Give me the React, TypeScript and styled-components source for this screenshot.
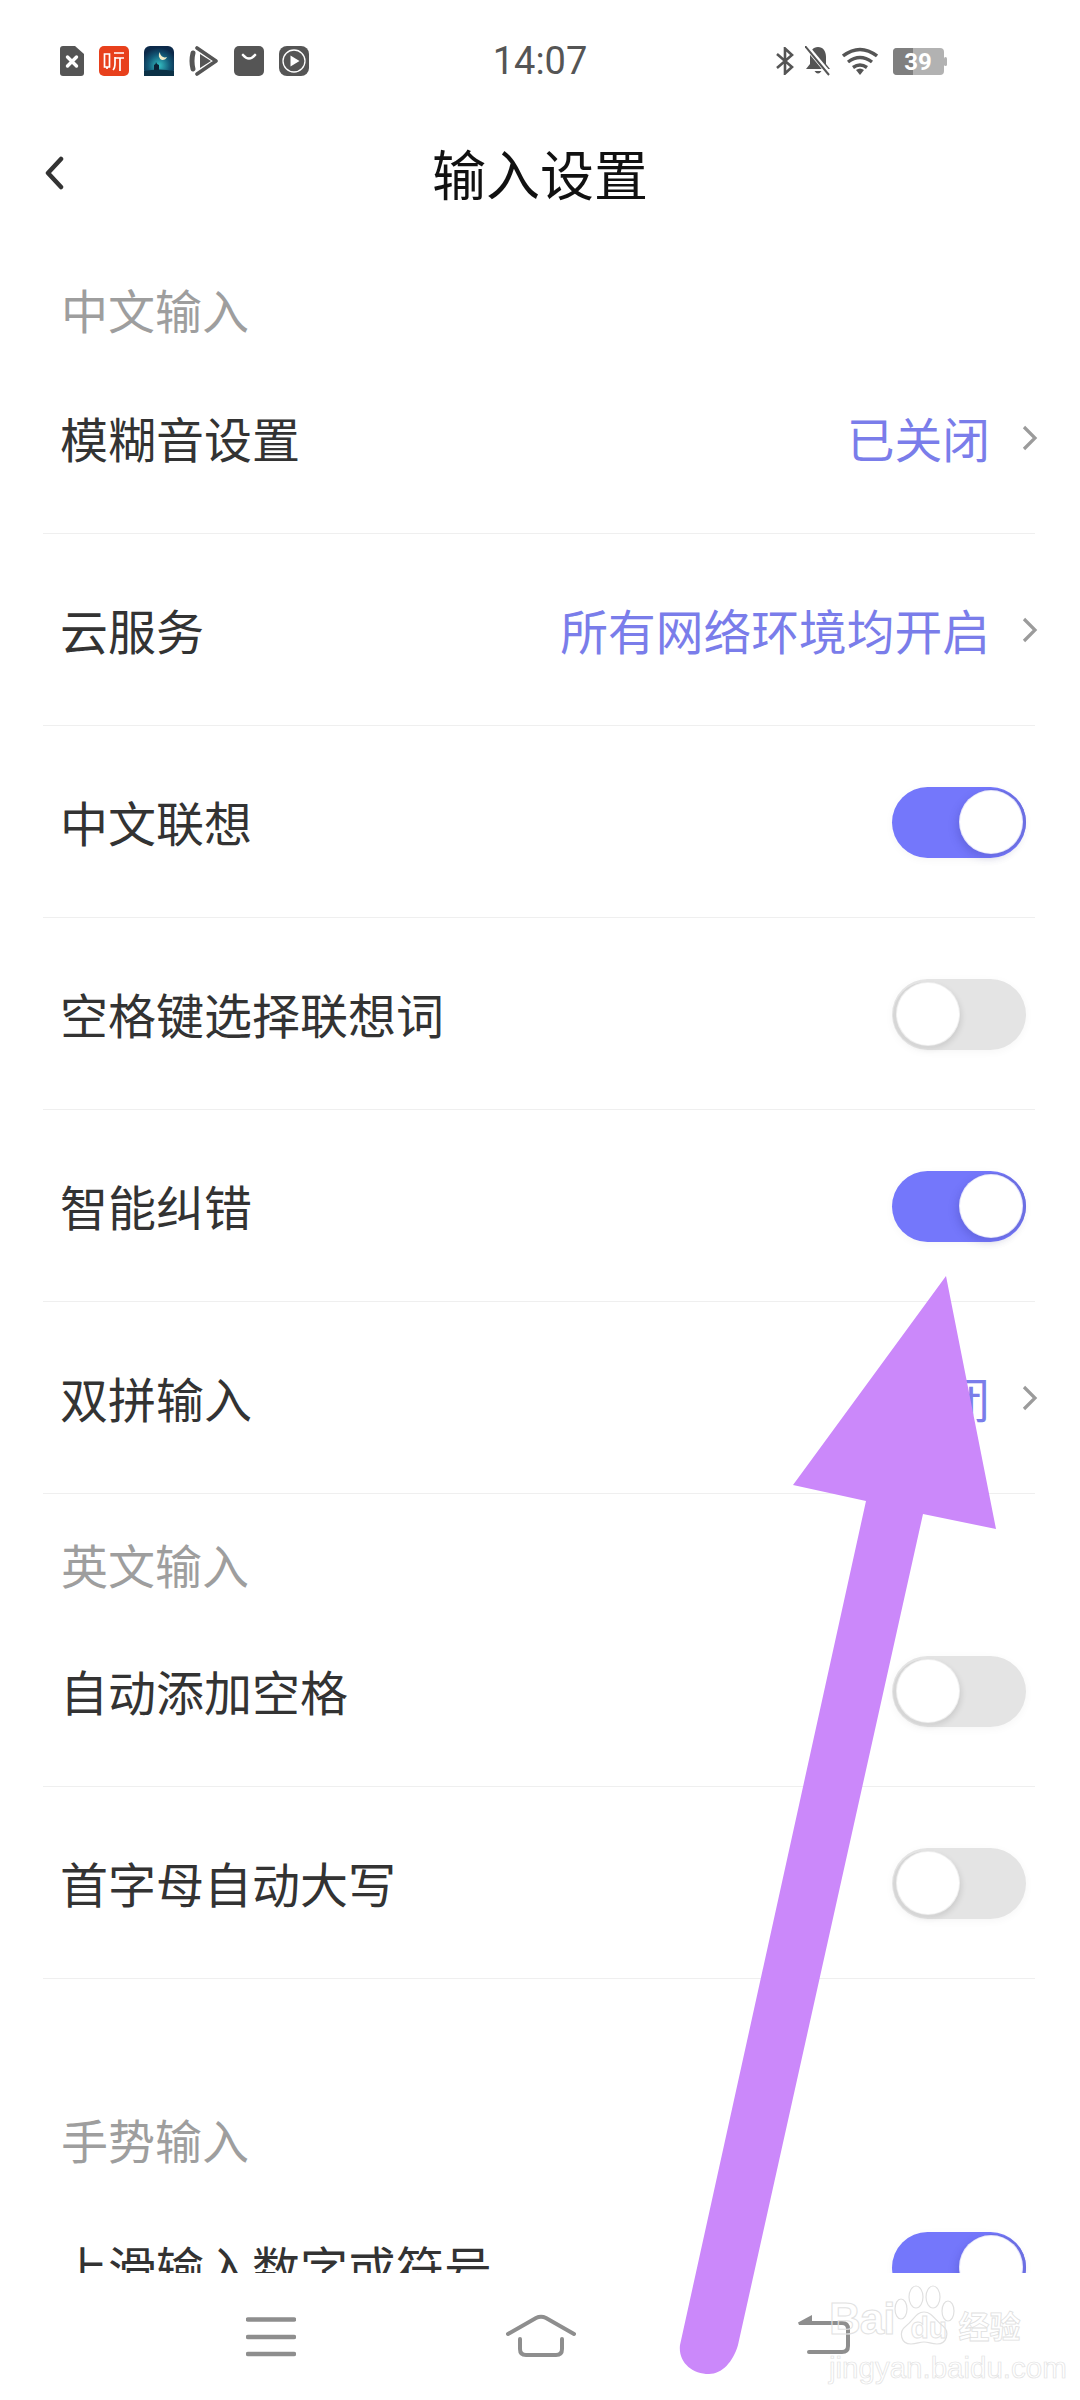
import React from 'react';
import styled, {createGlobalStyle} from 'styled-components';

const GlobalStyle = createGlobalStyle`
  html, body {
    margin: 0;
    padding: 0;
    background: #ffffff;
  }
  body {
    font-family: 'Noto Sans', 'Noto Sans CJK SC', sans-serif;
  }
`;

const Screen = styled.div`
  position: relative;
  width: 1080px;
  height: 2400px;
  background: #ffffff;
  overflow: hidden;
  display: flex;
  flex-direction: column;
`;

const StatusBar = styled.div`
  height: 122px;
  display: grid;
  grid-template-columns: 1fr auto 1fr;
  align-items: center;
  flex: none;
`;

const StatusLeft = styled.div`
  display: flex;
  align-items: center;
  gap: 15px;
  padding-left: 60px;
`;

const StatusRight = styled.div`
  display: flex;
  align-items: center;
  justify-content: flex-end;
  gap: 11px;
  padding-right: 133px;
`;

const Clock = styled.div`
  font-family: 'Roboto', sans-serif;
  font-size: 38px;
  color: #555555;
`;

const Header = styled.div`
  height: 108px;
  position: relative;
  display: flex;
  align-items: center;
  justify-content: center;
  flex: none;
`;

const BackButton = styled.svg`
  position: absolute;
  left: 44px;
  top: 34px;
`;

const Title = styled.div`
  font-size: 54px;
  line-height: 70px;
  color: #111111;
  margin-top: -2px;
`;

const List = styled.div`
  height: 2043px;
  overflow: hidden;
  flex: none;
`;

const SectionLabel = styled.div<{$height: number; $top: number}>`
  height: ${p => p.$height}px;
  margin-top: ${p => p.$top}px;
  padding-left: 61px;
  font-size: 47px;
  line-height: 60px;
  color: #9e9e9e;
`;

const Row = styled.div`
  height: 191px;
  margin: 0 45px 0 43px;
  border-bottom: 1px solid #efefef;
  display: flex;
  align-items: center;
  justify-content: space-between;
  padding-left: 17px;
`;

const RowLabel = styled.div`
  font-size: 48px;
  color: #333333;
  margin-top: -2px;
`;

const RowValue = styled.div`
  display: flex;
  align-items: center;
  gap: 32px;
  margin-right: -3px;
  font-size: 47.75px;
  color: #7a7dea;
`;

const Chevron = styled.svg`
  flex: none;
`;

const ToggleTrack = styled.div<{$on: boolean}>`
  position: relative;
  width: 134px;
  height: 71px;
  margin: 2px 9px 0 0;
  border-radius: 36px;
  background: ${p => (p.$on ? '#7477fb' : '#e4e4e4')};
  box-shadow: 0 2px 8px rgba(0, 0, 0, 0.04);
`;

const ToggleKnob = styled.div<{$on: boolean}>`
  position: absolute;
  top: 4px;
  left: ${p => (p.$on ? '68px' : '5px')};
  width: 62px;
  height: 62px;
  border-radius: 50%;
  background: #ffffff;
  box-shadow: ${p =>
    p.$on
      ? '0 0 0 1px #e6e6fb, 2px 0 0 2px #6c6fe2, -3px 4px 8px rgba(50, 50, 150, 0.25)'
      : '0 0 0 1px #f0f0f0, -2px 1px 0 2px #d6d6d6, 2px 3px 6px rgba(0, 0, 0, 0.12)'};
`;

const NavBar = styled.div`
  flex: 1;
  background: #ffffff;
  display: grid;
  grid-template-columns: 270px 270px 296px;
  padding-left: 136px;
  position: relative;
  z-index: 1;
`;

const NavItem = styled.div`
  display: flex;
  align-items: flex-start;
  justify-content: center;
  padding-top: 41px;
`;

const Arrow = styled.svg`
  position: absolute;
  top: 0;
  left: 0;
  z-index: 2;
  pointer-events: none;
`;

const Watermark = styled.div`
  position: absolute;
  z-index: 3;
  left: 829px;
  top: 2285px;
  width: 200px;
  color: transparent;
  font-family: 'Liberation Sans', sans-serif;
  white-space: nowrap;
`;

const WatermarkMain = styled.div`
  display: flex;
  align-items: flex-end;
  height: 62px;
`;

const WatermarkBai = styled.span`
  font-size: 44px;
  font-weight: 700;
  line-height: 46px;
  letter-spacing: -1px;
  margin-bottom: 5px;
  -webkit-text-stroke: 1px #e2e2e2;
`;

const PawWrap = styled.div`
  position: relative;
  width: 62px;
  height: 62px;
`;

const WatermarkDu = styled.span`
  position: absolute;
  left: 16px;
  bottom: 4px;
  font-size: 30px;
  font-weight: 700;
  line-height: 30px;
  -webkit-text-stroke: 0.9px #e2e2e2;
`;

const WatermarkCn = styled.span`
  font-family: 'Noto Sans CJK SC', sans-serif;
  font-size: 31px;
  line-height: 38px;
  font-weight: 700;
  margin: 0 0 3px 2px;
  -webkit-text-stroke: 0.8px #e0e0e0;
`;

const WatermarkUrl = styled.div`
  font-size: 29.5px;
  line-height: 34px;
  margin-top: 4px;
  font-weight: 400;
  -webkit-text-stroke: 0.7px #e2e2e2;
`;

const IconRow = {
  Doc: () => (
    <svg width="24" height="30" viewBox="0 0 24 30">
      <path d="M3 0h12l9 8v19a3 3 0 0 1-3 3H3a3 3 0 0 1-3-3V3a3 3 0 0 1 3-3z" fill="#555" />
      <path d="M7.500 11l9 9M16.500 11l-9 9" stroke="#fff" strokeWidth="3.4" strokeLinecap="round" />
    </svg>
  ),
  Ting: () => (
    <svg width="30" height="30" viewBox="0 0 30 30">
      <rect width="30" height="30" rx="5" fill="#e8401c" />
      <path
        d="M5.500 8h5v13h-5zM8 21v2M15 7h10M16 11v6q0 5-2 7M16 12h9M21 12v13"
        stroke="#fff"
        strokeWidth="1.7"
        fill="none"
      />
    </svg>
  ),
  Night: () => (
    <svg width="30" height="30" viewBox="0 0 30 30">
      <defs>
        <radialGradient id="night" cx="50%" cy="65%" r="60%">
          <stop offset="0%" stopColor="#35c0c4" />
          <stop offset="60%" stopColor="#125a78" />
          <stop offset="100%" stopColor="#0c2a4a" />
        </radialGradient>
      </defs>
      <rect width="30" height="30" rx="6" fill="url(#night)" />
      <path d="M16 6a5 5 0 0 0 2 8 5 5 0 0 0 5-3 5 5 0 0 1-7-5z" fill="#f2edc8" />
      <path d="M10 25v-6l1.500-1 .5-2 1 2 2 1v6z" fill="#0b2236" />
      <path d="M0 25q15-3 30 0v5H0z" fill="#0b3146" />
    </svg>
  ),
  Play: () => (
    <svg width="30" height="30" viewBox="0 0 30 30">
      <path d="M4 7Q2 15 4 23" stroke="#555" strokeWidth="5" fill="none" strokeLinecap="round" />
      <path d="M8 2l19 13L8 28" stroke="#555" strokeWidth="3.6" fill="none" strokeLinejoin="round" strokeLinecap="round" />
      <path d="M11 8l11 7-11 7z" fill="#555" />
    </svg>
  ),
  Bag: () => (
    <svg width="30" height="30" viewBox="0 0 30 30">
      <rect width="30" height="30" rx="5" fill="#555" />
      <path d="M9 9q6 7 12 0" stroke="#fff" strokeWidth="2.6" fill="none" strokeLinecap="round" />
    </svg>
  ),
  Circle: () => (
    <svg width="30" height="30" viewBox="0 0 30 30">
      <rect width="30" height="30" rx="8" fill="#555" />
      <circle cx="15" cy="15" r="11" stroke="#fff" strokeWidth="1.3" fill="none" />
      <path d="M11.500 9.500l9 5.500-9 5.500z" fill="#fff" />
    </svg>
  ),
};

const StatusIcons = () => (
  <>
    <svg width="18" height="28" viewBox="0 0 18 28">
      <path d="M1 7l15 13-7 6.500V1.500L16 8 1 21" stroke="#555" strokeWidth="2.6" fill="none" />
    </svg>
    <svg width="26" height="30" viewBox="0 0 26 30">
      <path d="M13 1c5 0 8 4 8 10v7l4 5H1l4-5v-7C5 5 8 1 13 1z" fill="#555" />
      <path d="M9.500 25q3.500 5 7 0z" fill="#555" />
      <path d="M1 0l24 29" stroke="#fff" strokeWidth="5" />
      <path d="M0 0l24 29" stroke="#555" strokeWidth="2" />
    </svg>
    <svg width="36" height="28" viewBox="0 0 36 28">
      <path d="M1 9q17-13 34 0M6 15q12-9 24 0M11 20.500q7-5 14 0" stroke="#555" strokeWidth="3.4" fill="none" />
      <path d="M14 23q4-3 8 0l-4 5z" fill="#555" />
    </svg>
    <svg width="54" height="27" viewBox="0 0 54 27" style={{marginLeft: 4}}>
      <rect width="51" height="27" rx="4" fill="#b2b2b2" />
      <path d="M4 0h16v27H4a4 4 0 0 1-4-4V4a4 4 0 0 1 4-4z" fill="#7f7f7f" />
      <rect x="51" y="9" width="3" height="9" rx="1.500" fill="#b2b2b2" />
      <text x="25" y="22" fontSize="24" fontWeight="700" textAnchor="middle" fill="#fff" fontFamily="Roboto, sans-serif">
        39
      </text>
    </svg>
  </>
);

const RowChevron = () => (
  <Chevron width="16" height="26" viewBox="0 0 16 26">
    <path d="M2 2l11 11L2 24" stroke="#9b9b9b" strokeWidth="3.200" fill="none" />
  </Chevron>
);

const Toggle = ({on}: {on: boolean}) => (
  <ToggleTrack $on={on}>
    <ToggleKnob $on={on} />
  </ToggleTrack>
);

type Item = {label: string; value?: string; toggle?: boolean};

const Items = ({items}: {items: Item[]}) => (
  <>
    {items.map(item => (
      <Row key={item.label}>
        <RowLabel>{item.label}</RowLabel>
        {item.value ? (
          <RowValue>
            {item.value}
            <RowChevron />
          </RowValue>
        ) : (
          <Toggle on={!!item.toggle} />
        )}
      </Row>
    ))}
  </>
);

const App = () => (
  <Screen>
    <GlobalStyle />
    <StatusBar>
      <StatusLeft>
        <IconRow.Doc />
        <IconRow.Ting />
        <IconRow.Night />
        <IconRow.Play />
        <IconRow.Bag />
        <IconRow.Circle />
      </StatusLeft>
      <Clock>14:07</Clock>
      <StatusRight>
        <StatusIcons />
      </StatusRight>
    </StatusBar>
    <Header>
      <BackButton width="22" height="34" viewBox="0 0 22 34">
        <path d="M17 3L4 17l13 14" stroke="#333" strokeWidth="4.500" fill="none" strokeLinecap="round" strokeLinejoin="round" />
      </BackButton>
      <Title>输入设置</Title>
    </Header>
    <List>
      <SectionLabel $height={61} $top={51}>中文输入</SectionLabel>
      <Items
        items={[
          {label: '模糊音设置', value: '已关闭'},
          {label: '云服务', value: '所有网络环境均开启'},
          {label: '中文联想', toggle: true},
          {label: '空格键选择联想词'},
          {label: '智能纠错', toggle: true},
          {label: '双拼输入', value: '关闭'},
        ]}
      />
      <SectionLabel $height={59} $top={42}>英文输入</SectionLabel>
      <Items items={[{label: '自动添加空格'}, {label: '首字母自动大写'}]} />
      <SectionLabel $height={60} $top={132}>手势输入</SectionLabel>
      <Items items={[{label: '上滑输入数字或符号', toggle: true}]} />
    </List>
    <NavBar>
      <NavItem>
        <svg width="50" height="44" viewBox="0 0 50 44">
          <path d="M2 5.500h46M2 23h46M2 40h46" stroke="#8e8e8e" strokeWidth="4.500" strokeLinecap="round" />
        </svg>
      </NavItem>
      <NavItem>
        <svg width="70" height="44" viewBox="0 0 70 44">
          <path
            d="M2 20L30 4Q35 1.500 40 4L68 20M14 25V35Q14 41 20 41H50Q56 41 56 35V25"
            stroke="#8e8e8e"
            strokeWidth="4"
            strokeLinecap="round"
            fill="none"
          />
        </svg>
      </NavItem>
      <NavItem>
        <svg width="52" height="42" viewBox="0 0 52 42">
          <path
            d="M14 9H44Q50 9 50 15V32Q50 38 44 38H11"
            stroke="#8e8e8e"
            strokeWidth="4"
            strokeLinecap="round"
            fill="none"
          />
          <path d="M0 8.500L14 1v10H1z" fill="#8e8e8e" />
        </svg>
      </NavItem>
    </NavBar>
    <Arrow width="1080" height="2400" viewBox="0 0 1080 2400">
      <path
        d="M946 1276L996 1529L923 1514L738 2345C733 2362 722 2374 709 2374C692 2374 678 2362 680 2345L866 1501L793 1485Z"
        fill="#cb88fa"
      />
    </Arrow>
    <Watermark>
      <WatermarkMain>
        <WatermarkBai>Bai</WatermarkBai>
        <PawWrap>
          <svg width="62" height="62" viewBox="0 0 62 62" fill="#fff" fillOpacity="0" stroke="#e0e0e0" strokeWidth="1.200">
            <ellipse cx="7" cy="24" rx="6" ry="10" />
            <ellipse cx="22" cy="12" rx="7" ry="11" />
            <ellipse cx="39" cy="12" rx="7" ry="11" />
            <ellipse cx="54" cy="26" rx="6" ry="10" />
            <path d="M30 27C38 27 41 35 49 41C56 47 53 59 43 59C37 59 35 57 30 57C25 57 23 59 17 59C7 59 4 47 12 41C20 35 22 27 30 27Z" />
          </svg>
          <WatermarkDu>du</WatermarkDu>
        </PawWrap>
        <WatermarkCn>经验</WatermarkCn>
      </WatermarkMain>
      <WatermarkUrl>jingyan.baidu.com</WatermarkUrl>
    </Watermark>
  </Screen>
);

export default App;
